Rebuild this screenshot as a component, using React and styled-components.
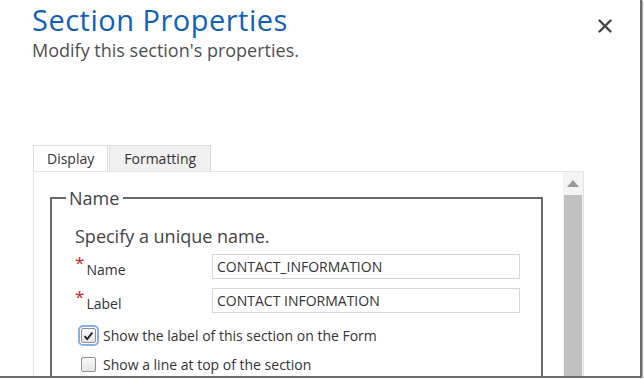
import React from 'react';
import styled, { createGlobalStyle } from 'styled-components';

const GlobalStyle = createGlobalStyle`
  html, body {
    margin: 0;
    padding: 0;
    background: #fff;
    overflow: hidden;
  }
  body {
    font-family: "Open Sans", "Noto Sans", sans-serif;
  }
`;

const Frame = styled.div`
  width: 642px;
  height: 378px;
  box-sizing: border-box;
  border-right: 2px solid #6b6b6b;
  border-bottom: 2px solid #6b6b6b;
  box-shadow: 1px 1px 1px #b0b0b0;
  overflow: hidden;
  background: #fff;
`;

const Header = styled.div`
  display: flex;
  justify-content: space-between;
  align-items: flex-start;
  padding: 0 26px 0 32px;
`;

const TitleBlock = styled.div`
  display: flex;
  flex-direction: column;
`;

const Title = styled.h1`
  margin: 0;
  font-weight: 400;
  font-size: 29px;
  line-height: 40px;
  color: #1160b7;
  letter-spacing: 0.5px;
`;

const Subtitle = styled.div`
  font-size: 18px;
  line-height: 20px;
  color: #505050;
`;

const CloseButton = styled.button`
  margin-top: 17px;
  width: 18px;
  height: 18px;
  padding: 0;
  border: none;
  background: none;
  display: flex;
  align-items: center;
  justify-content: center;
`;

const Body = styled.div`
  margin: 85px 0 0 33px;
  width: 551px;
`;

const TabStrip = styled.div`
  display: flex;
`;

const Tab = styled.div`
  height: 26px;
  box-sizing: border-box;
  padding: 0 ${p => (p.$active ? 13 : 14)}px;
  margin-right: 1px;
  font-size: 14px;
  line-height: 25px;
  color: #333;
  border: 1px solid #dcdcdc;
  border-bottom: none;
  background: ${p => (p.$active ? '#fff' : '#f0f0f0')};
`;

const Panel = styled.div`
  display: flex;
  height: 240px;
  border: 1px solid #e3e3e3;
  border-bottom: none;
`;

const Content = styled.div`
  flex: 1;
  padding: 18px 0 0 16px;
`;

const Scrollbar = styled.div`
  width: 20px;
  display: flex;
  flex-direction: column;
  background: #f4f4f4;
`;

const ScrollArrow = styled.div`
  height: 23px;
  display: flex;
  align-items: center;
  justify-content: center;
`;

const ScrollThumb = styled.div`
  flex: 1;
  margin: 0 1px;
  background: #c1c1c1;
`;

const Fieldset = styled.fieldset`
  width: 493px;
  box-sizing: border-box;
  margin: 0;
  padding: 0 0 0 23px;
  border: 2px solid #6a6a6a;
  border-bottom: none;
  min-height: 200px;
`;

const Legend = styled.legend`
  margin-left: -9px;
  padding: 0 4px 0 3px;
  font-size: 18px;
  line-height: 16px;
  color: #444;
`;

const Hint = styled.div`
  margin-top: 19px;
  font-size: 18px;
  line-height: 22px;
  color: #444;
`;

const FieldRow = styled.div`
  display: flex;
  align-items: center;
  margin-top: ${p => p.$gap}px;
`;

const FieldLabel = styled.label`
  width: 137px;
  display: flex;
  align-items: flex-start;
  font-size: 14px;
  color: #333;
  padding-top: 6px;
`;

const Required = styled.span`
  color: #d02020;
  font-size: 17px;
  line-height: 12px;
  margin-right: 2px;
  margin-top: -3px;
`;

const TextInput = styled.input`
  width: 308px;
  height: 25px;
  box-sizing: border-box;
  border: 1px solid #d6d6d6;
  padding: 0 4px;
  font-family: "Open Sans", "Noto Sans", sans-serif;
  font-size: 14px;
  color: #333;
  outline: none;
`;

const CheckRow = styled.label`
  display: flex;
  align-items: center;
  margin-top: ${p => p.$gap}px;
  font-size: 14px;
  color: #333;
`;

const CheckBox = styled.span`
  width: 15px;
  height: 15px;
  box-sizing: border-box;
  margin: 0 7px 0 6px;
  border: 1px solid #8f8f8f;
  border-radius: 2px;
  background: linear-gradient(#fafafa, #e4e4e4);
  display: flex;
  align-items: center;
  justify-content: center;
  ${p => p.$focus && `
    outline: 2px solid #86aef0;
    outline-offset: 1px;
  `}
`;

export default function App() {
  return (
    <>
      <GlobalStyle />
      <Frame>
        <Header>
          <TitleBlock>
            <Title>Section Properties</Title>
            <Subtitle>Modify this section's properties.</Subtitle>
          </TitleBlock>
          <CloseButton aria-label="Close">
            <svg width="14" height="14" viewBox="0 0 14 14">
              <path d="M1.5 1.5 L12.5 12.5 M12.5 1.5 L1.5 12.5" stroke="#444" strokeWidth="2.4" strokeLinecap="round" />
            </svg>
          </CloseButton>
        </Header>
        <Body>
          <TabStrip>
            <Tab $active>Display</Tab>
            <Tab>Formatting</Tab>
          </TabStrip>
          <Panel>
            <Content>
              <Fieldset>
                <Legend>Name</Legend>
                <Hint>Specify a unique name.</Hint>
                <FieldRow $gap={7}>
                  <FieldLabel><Required>*</Required>Name</FieldLabel>
                  <TextInput readOnly value="CONTACT_INFORMATION" />
                </FieldRow>
                <FieldRow $gap={9}>
                  <FieldLabel><Required>*</Required>Label</FieldLabel>
                  <TextInput readOnly value="CONTACT INFORMATION" />
                </FieldRow>
                <CheckRow $gap={13}>
                  <CheckBox $focus>
                    <svg width="11" height="10" viewBox="0 0 11 10">
                      <path d="M1.5 5.2 L4.2 8 L9.4 1.6" fill="none" stroke="#222" strokeWidth="1.9" />
                    </svg>
                  </CheckBox>
                  Show the label of this section on the Form
                </CheckRow>
                <CheckRow $gap={10}>
                  <CheckBox />
                  Show a line at top of the section
                </CheckRow>
              </Fieldset>
            </Content>
            <Scrollbar>
              <ScrollArrow>
                <svg width="12" height="7" viewBox="0 0 12 7">
                  <path d="M0 7 L6 0 L12 7 Z" fill="#9a9a9a" />
                </svg>
              </ScrollArrow>
              <ScrollThumb />
            </Scrollbar>
          </Panel>
        </Body>
      </Frame>
    </>
  );
}
